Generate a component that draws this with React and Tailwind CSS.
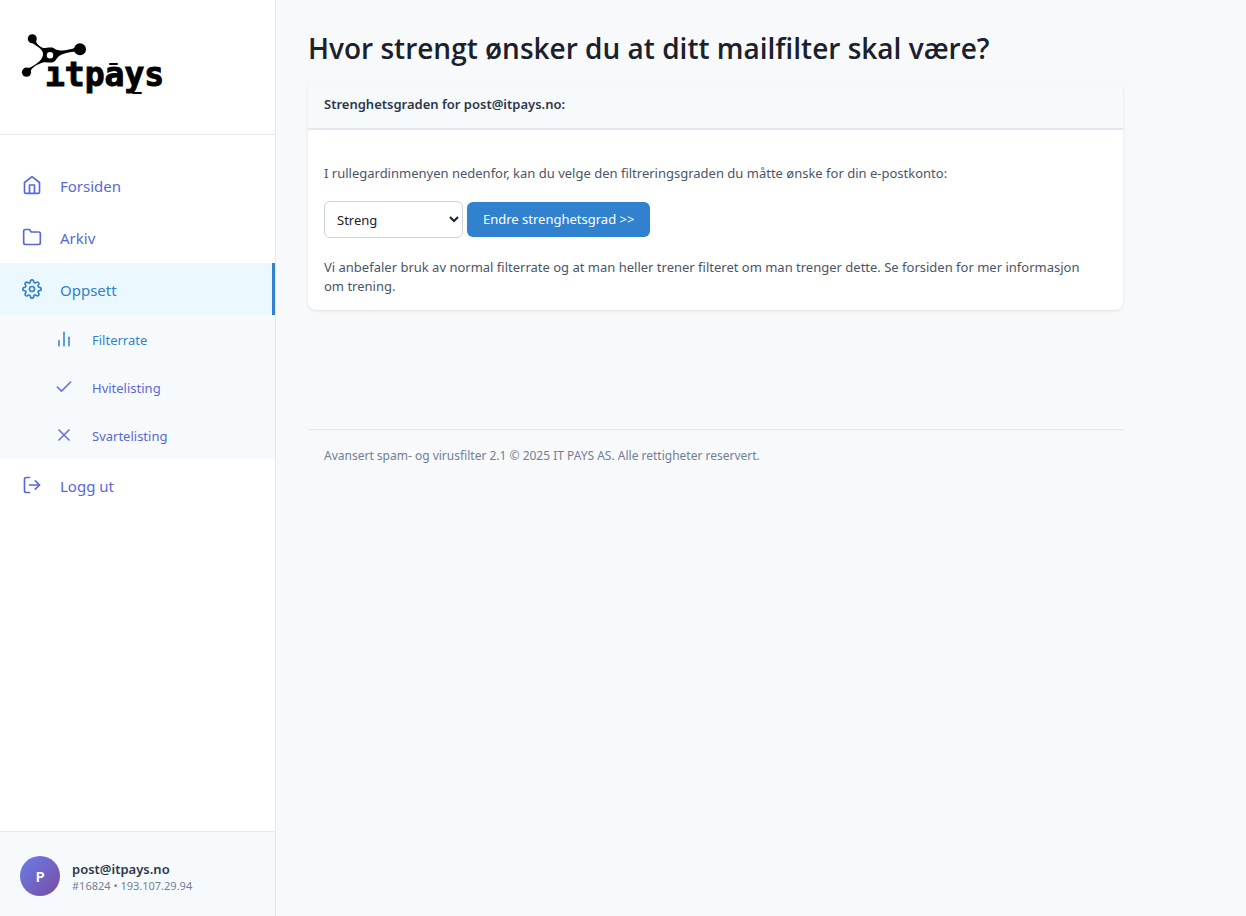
import React from 'react';
import { FiHome, FiFolder, FiSettings, FiBarChart2, FiCheck, FiX, FiLogOut } from 'react-icons/fi';
import { clsx } from 'clsx';

const NAV_ITEMS = [
    { label: 'Forsiden', icon: FiHome },
    { label: 'Arkiv', icon: FiFolder },
    {
        label: 'Oppsett',
        icon: FiSettings,
        active: true,
        children: [
            { label: 'Filterrate', icon: FiBarChart2, active: true },
            { label: 'Hvitelisting', icon: FiCheck },
            { label: 'Svartelisting', icon: FiX },
        ],
    },
    { label: 'Logg ut', icon: FiLogOut },
];

const Logo = () => (
    <svg viewBox="0 0 144 64" className="w-36 h-16" role="img" aria-label="itpays">
        {/* Molecule */}
        <circle cx="12.3" cy="8.7" r="4.5" />
        <circle cx="60" cy="19.3" r="6" />
        <circle cx="6.5" cy="42.2" r="4.6" />
        <path
            fillRule="evenodd"
            d="M15.500 9.500C16 13 19 16.500 23 18C26 18.500 28 17 31 17.500C34 17.500 35 19.800 39 20.300C45 21 50 19.500 56 17.500L56 21.500C50 22 42 23.500 38.500 26.500C36 29 35.500 32 32 32.500C29 33 26 31.500 23 32.500C17 34.500 12 37 9.500 43L7 38.500C13 37 20 31.500 22 28C23.500 25 23.500 22.500 21.500 20C18.500 17 15 14.500 11 12.500ZM30 22A3.200 3.200 0 1 0 30 28.400A3.200 3.200 0 1 0 30 22Z"
        />
        {/* Wordmark, with the bars above and below it */}
        <text
            x="25"
            y="56"
            fontSize="33"
            fontWeight="700"
            fontFamily="'DejaVu Sans Mono', monospace"
            stroke="currentColor"
            strokeWidth="1"
        >
            ıtpays
        </text>
        <rect x="89" y="33" width="9" height="2" rx="1" />
        <rect x="112" y="62" width="10" height="2" rx="1" />
    </svg>
);

const NavItem = ({ item }) => {
    const Icon = item.icon;

    return (
        <li>
            <a
                href="#"
                className={clsx(
                    'flex h-13 items-center gap-4 pl-5 text-[15px]',
                    item.active
                        ? 'border-r-3 border-[#3182ce] bg-[#ebf8ff] text-[#3182ce]'
                        : 'text-[#5a67d8]'
                )}
            >
                <span className="flex w-6 justify-center">
                    <Icon size={20} />
                </span>
                <span className="pt-0.5">{item.label}</span>
            </a>

            {item.children && (
                <ul className="bg-[#f7fafc]">
                    {item.children.map((child) => (
                        <SubItem key={child.label} item={child} />
                    ))}
                </ul>
            )}
        </li>
    );
};

const SubItem = ({ item }) => {
    const Icon = item.icon;

    return (
        <li>
            <a
                href="#"
                className={clsx(
                    'flex h-12 items-center gap-4 pl-13 text-[13px]',
                    item.active ? 'text-[#3182ce]' : 'text-[#5a67d8]'
                )}
            >
                <span className="flex w-6 justify-center opacity-90">
                    <Icon size={20} />
                </span>
                <span className="pt-1">{item.label}</span>
            </a>
        </li>
    );
};

const Sidebar = () => (
    <aside className="flex w-69 shrink-0 flex-col border-r border-[#e2e8f0] bg-white">
        <div className="h-[135px] border-b border-[#e2e8f0] px-5 pt-[30px]">
            <a href="#" className="inline-block">
                <Logo />
            </a>
        </div>

        <nav className="flex-1 pt-6">
            <ul>
                {NAV_ITEMS.map((item) => (
                    <NavItem key={item.label} item={item} />
                ))}
            </ul>
        </nav>

        {/* Logged in user */}
        <div className="flex items-center gap-3 border-t border-[#e2e8f0] bg-[#f7fafc] px-5 pt-6 pb-5">
            <div className="flex size-10 items-center justify-center rounded-full bg-linear-135 from-[#667eea] to-[#764ba2] text-[15px] font-semibold text-white">
                P
            </div>
            <div className="pt-0.5">
                <div className="text-[13px] leading-[18px] font-semibold text-[#2d3748]">post@itpays.no</div>
                <div className="text-[11px] leading-4 text-[#718096]">#16824 • 193.107.29.94</div>
            </div>
        </div>
    </aside>
);

export default function App() {
    return (
        <div className="flex min-h-screen bg-[#f8f9fb] font-['Noto_Sans',sans-serif]">
            <Sidebar />

            <main className="flex-1 p-8">
                <div className="w-9/10">
                    <h1 className="mb-4 font-['Open_Sans',sans-serif] text-[28px] leading-[33px] font-semibold text-[#1a202c]">
                        Hvor strengt ønsker du at ditt mailfilter skal være?
                    </h1>

                    <section className="overflow-hidden rounded-lg bg-white shadow-[0_1px_3px_rgba(0,0,0,0.1)]">
                        <h2 className="border-b-2 border-[#e2e8f0] bg-[#f7fafc] px-4 py-3.5 text-[13px] leading-[19px] font-semibold text-[#2d3748]">
                            Strenghetsgraden for post@itpays.no:
                        </h2>

                        <form className="px-4 pt-8 pb-3.5 text-[13px] leading-[19px] text-[#4a5568]" onSubmit={(e) => e.preventDefault()}>
                            <label htmlFor="rate" className="block pt-0.5">
                                I rullegardinmenyen nedenfor, kan du velge den filtreringsgraden du måtte ønske for din
                                e-postkonto:
                            </label>

                            <div className="flex items-center gap-1 pt-[18px] pb-5">
                                <select
                                    id="rate"
                                    defaultValue="Streng"
                                    className="h-[37px] w-[139px] rounded-md border border-[#cbd5e0] bg-white px-2 text-[#1a202c]"
                                >
                                    <option>Mild</option>
                                    <option>Normal</option>
                                    <option>Streng</option>
                                </select>
                                <button type="submit" className="h-[35px] rounded-md bg-[#3182ce] px-4 text-white">
                                    Endre strenghetsgrad &gt;&gt;
                                </button>
                            </div>

                            <p className="pr-4">
                                Vi anbefaler bruk av normal filterrate og at man heller trener filteret om man trenger
                                dette. Se forsiden for mer informasjon om trening.
                            </p>
                        </form>
                    </section>

                    <footer className="mt-[119px] border-t border-[#e2e8f0] p-4 text-xs leading-[19px] text-[#718096]">
                        Avansert spam- og virusfilter 2.1 © 2025 IT PAYS AS. Alle rettigheter reservert.
                    </footer>
                </div>
            </main>
        </div>
    );
}
